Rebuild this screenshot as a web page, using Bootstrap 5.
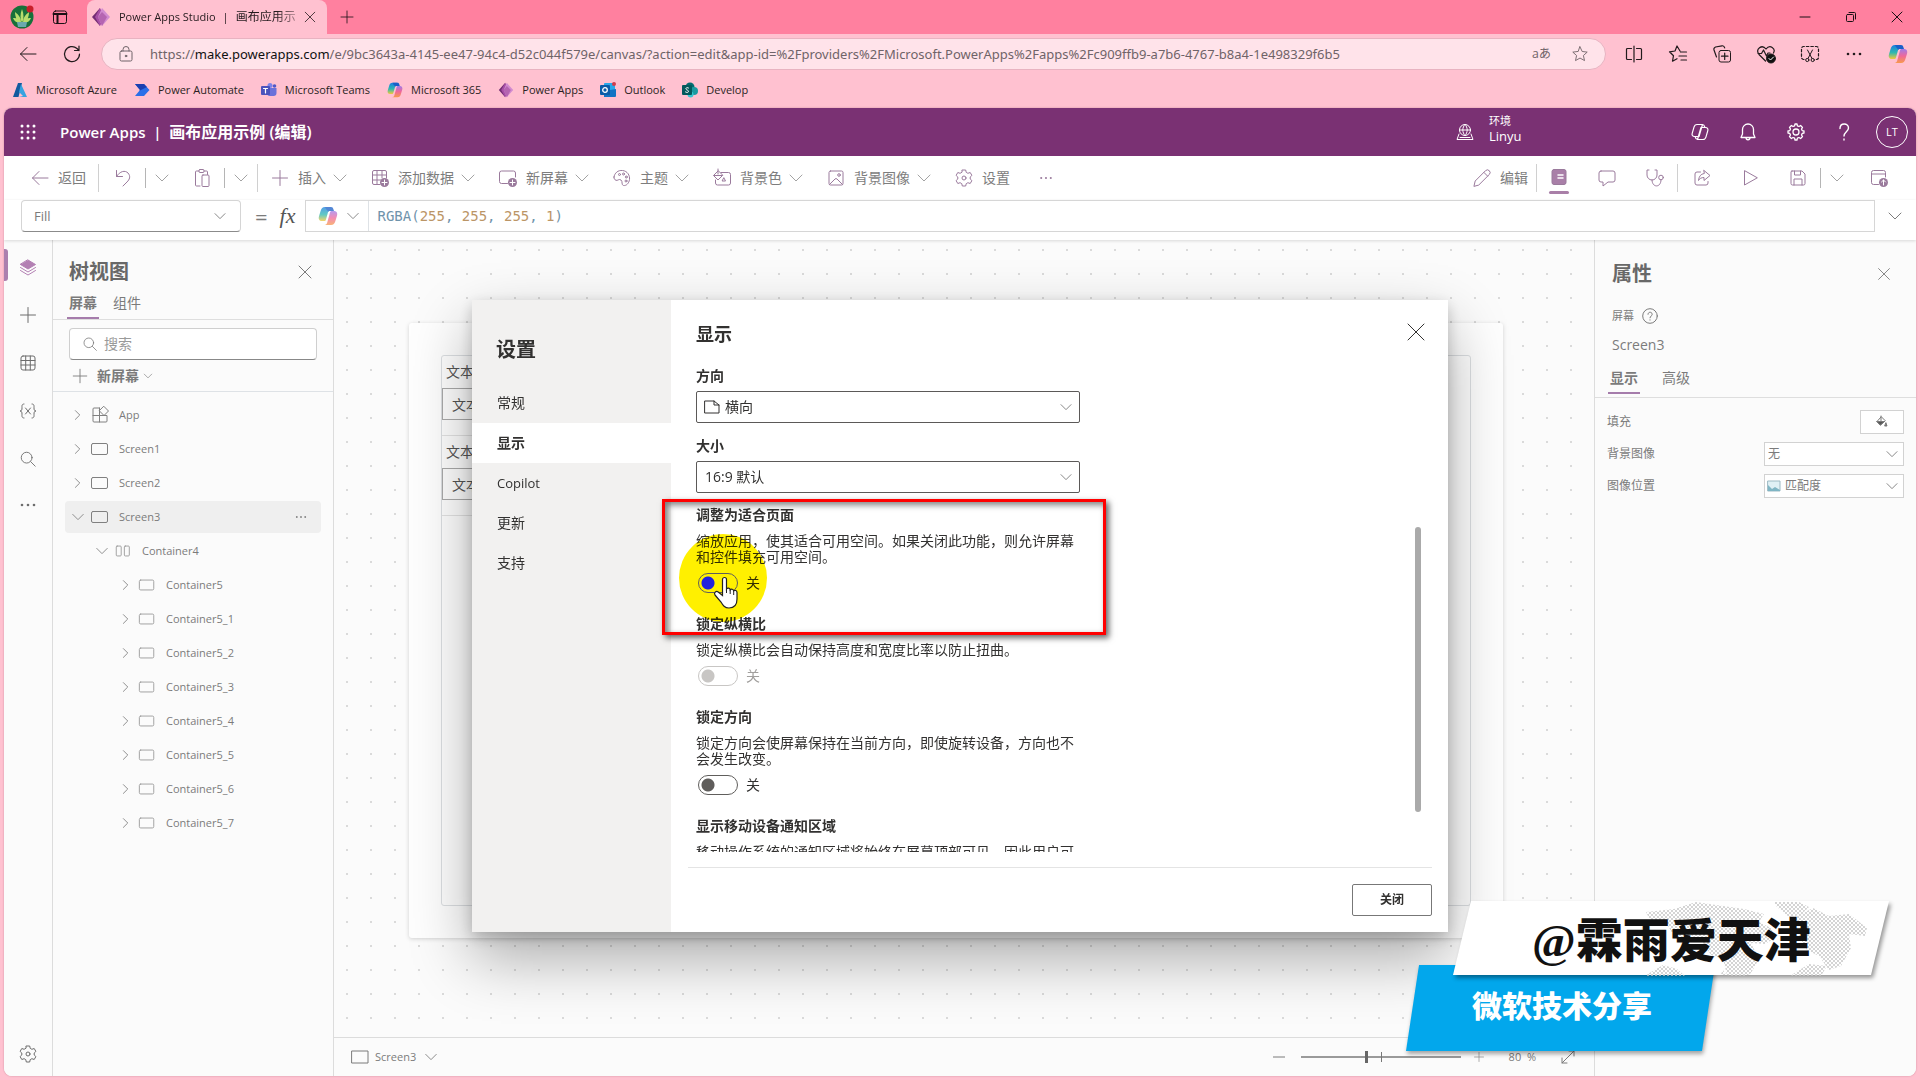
<!DOCTYPE html>
<html lang="zh-CN">
<head>
<meta charset="utf-8">
<meta name="viewport" content="width=device-width, initial-scale=1">
<title>Power Apps Studio | 画布应用示例</title>
<link href="https://cdn.jsdelivr.net/npm/bootstrap@5.3.0/dist/css/bootstrap.min.css" rel="stylesheet">
<style>
body{font-family:"Open Sans","Noto Sans CJK SC",sans-serif;font-size:14px;line-height:20px;color:#7b7b7b;background:#ffc1d0;height:100vh;overflow:hidden}
button{font-family:inherit;color:inherit}
a{color:inherit;text-decoration:none}
.ic{width:20px;height:20px;flex:none;fill:none;stroke:currentColor;stroke-width:1;stroke-linecap:round;stroke-linejoin:round}
.ic-sm{width:16px;height:16px}
.ic-xs{width:12px;height:12px}
.bare{background:none;border:0;padding:0;display:inline-flex;align-items:center;flex:none}
/* browser frame */
.tabstrip{height:34px;background:#ff809f;color:#1b1014}
.stripstart{width:87px;padding-left:10px;gap:16px}
.face{width:24px;height:24px}
.tabitem{width:240px;background:#ffc1d0;border-radius:8px 8px 0 0;font-size:12px;color:#241a1d}
.tabname{width:179px;white-space:nowrap;-webkit-mask-image:linear-gradient(90deg,#000 88%,rgba(0,0,0,.3))}
.tabname b{font-weight:400;font-size:11px}
.winbtn{width:46px;justify-content:center}
.addrrow{height:40px;color:#221a1c;padding:0 12px 0 18px}
.addr{background:#ffe3ea;border:1px solid #e8b3c1;border-radius:16px;height:32px;color:#6f6368;margin:0 18px 0 19px}
.urltext{font-family:"Noto Sans",sans-serif;font-size:13px;white-space:nowrap}
.urltext b{font-weight:400;color:#111}
.favrow{height:34px;padding:0 12px 2px;gap:17px;color:#2b1f23}
.fav{font-size:11px}
/* app */
.appwin{margin:0 4px 4px;border-radius:8px;overflow:hidden;background:#fff;position:relative;box-shadow:0 0 2px #c98a9b;min-height:0}
.suite{height:48px;background:#7a3173;color:#fff;padding:0 8px 0 14px}
.suitename{font-size:15px;font-weight:600;margin-left:22px}
.suitename span{font-size:16px}
.envpick{width:221px;gap:14px}
.envpick small{display:block;font-size:11px;line-height:14px}
.envpick b{display:block;font-size:13px;line-height:16px;font-weight:400;margin-bottom:6px}
.suitebtn{width:48px;justify-content:center}
.person{width:32px;height:32px;border:1px solid #fff;border-radius:50%;font-size:11px;display:flex;align-items:center;justify-content:center}
.cmdbar{height:44px;padding:0 27px 0 26px;color:#7d7d7d}
.cmdbar .ic{color:#9a7a9c}
.cmd{gap:8px}
.cmd .ic-sm,.chev{color:#a3a3a3!important;margin-left:-2px}
.gap22{gap:22px}.gap28{gap:28px}
.rule{width:1px;height:28px;background:#d0d0d0;flex:none;margin:0 14px 0 12px}
.rule-s{height:20px;background:#b5b5b5;margin:0 10px 0 12px}
.rule-t{margin:0 12px 0 8px}
.activetool{position:relative}
.activetool::after{content:"";position:absolute;left:0;right:0;bottom:-6px;height:3px;border-radius:2px;background:#a97fa8}
.fxrow{height:40px;padding:0 13px 9px 17px;box-shadow:0 1px 3px rgba(0,0,0,.14);position:relative;z-index:2;background:#fff}
.sel{appearance:none;border:1px solid #ccc;border-radius:0;background:#fff url("data:image/svg+xml,%3Csvg xmlns='http://www.w3.org/2000/svg' viewBox='0 0 16 16'%3E%3Cpath d='M2 5l6 6 6-6' fill='none' stroke='%23777' stroke-width='1'/%3E%3C/svg%3E") no-repeat right 10px center/14px 14px;color:inherit;padding:0 8px;line-height:20px}
.propsel{width:220px;height:32px;border-radius:4px;border-color:#d5d5d5;border-bottom-color:#8b8b8b;padding-left:12px;font-size:13px;background-position:right 13px center}
.eqmark{margin-left:14px;font-size:22px}
.fxmark{font:italic 22px "Liberation Serif",serif;color:#555;margin:0 10px 0 12px}
.fbox{border:1px solid #d6d6d6;height:32px}
.code{font-family:"DejaVu Sans Mono",monospace;font-size:14px;color:#6f93ab;padding-left:8px}
.code i{font-style:normal;color:#bb9566}
/* workspace */
.work{background:#fbfbfb;min-height:0}
.rail{width:49px;border-right:1px solid #dcdcdc;padding:3px 0 0}
.railbtn{height:48px;width:48px;justify-content:center;position:relative;color:#6d6d6d}
.railbtn.short{height:44px}
.railbtn.on{color:#b380b3}
.railbtn.on::before{content:"";position:absolute;left:0;top:6px;height:32px;width:4px;background:#ab7fae;border-radius:0 3px 3px 0}
.tree{width:281px;border-right:1px solid #dcdcdc}
.ptitle{font-size:20px;line-height:28px;font-weight:700;color:#686868;margin:0}
.ptabs{border-bottom:1px solid #dedede;gap:12px}
.ptabs button{padding:0 2px 4px;border-bottom:2px solid transparent}
.ptabs .on{border-color:#a57cab;font-weight:700}
.searchbox{height:32px;border:1px solid #cfcfcf;border-bottom-color:#888;border-radius:4px;background:#fff;padding:0 12px;gap:6px}
.searchbox input{border:0;outline:0;width:100%;padding:0;background:none}
.searchbox input::placeholder{color:#9a9a9a;opacity:1}
.newscr{padding:6px 16px 5px 18px}
.ic-10{width:10px;height:10px}.ic-14{width:14px;height:14px}.ic-18{width:18px;height:18px}
.trow{height:34px;font-size:11px;padding:1px 12px}
.trow>div{height:32px;border-radius:4px;padding:0 13px 0 6px}
.trow.on>div{background:#efefef}
.l1>div{padding-left:30px}.l2>div{padding-left:54px}
.trow .ic-sm{width:14px;height:14px;color:#999}
.trow .nm{margin-left:9px}
.trow .ic{color:#808080}.trow .ic-sm+.ic{margin-left:5px}
.l1 .ic:not(.ic-sm),.l2 .ic:not(.ic-sm){color:#9a9a9a;width:18px}
.l1 .nm,.l2 .nm{margin-left:10px}
.canvas{background:#fbfbfb radial-gradient(circle,#dadada 1px,transparent 1px) 1px -2px/24px 24px;padding:83px 91px 99px 75px}
.pageframe{background:#fefefe;box-shadow:0 1px 4px rgba(0,0,0,.17);border-radius:3px;padding:32px}
.inner{border:1px solid #dcdfe2;border-radius:3px;height:100%;font-size:14px;color:#555}
.inner div{height:32px;padding:6px 4px 0;width:60%}
.inner .fld{border:1px solid #aaa;padding-left:9px}
.inner .sp{height:16px;border-bottom:1px solid #e3e3e3}
.statusbar{height:39px;border-top:1px solid #dcdcdc;background:#fbfbfb;padding:0 18px 0 17px;font-size:11px}
.zoomer{appearance:none;width:160px;height:14px;margin:0;background:linear-gradient(#9a9a9a,#9a9a9a) center/100% 2px no-repeat}
.zoomer::-webkit-slider-thumb{appearance:none;width:3px;height:12px;background:#666;box-shadow:15px 0 0 -1px #777}
.props{width:322px;border-left:1px solid #dcdcdc;font-size:12px}
.prow{height:32px;padding:0 12px}
.prow .sel{width:140px;height:24px;font-size:12px;padding-left:3px;background-position:right 4px center;border-color:#d2d2d2}
.prow .withpic{padding-left:20px}
.prow .dselwrap .ic{left:1px;top:3px}
.fillbtn{width:44px;height:24px;background:#fff;border:1px solid #d2d2d2;justify-content:center}
/* dialog */
.veil{position:absolute;inset:48px 0 0;z-index:5}
.dlg{width:976px;height:632px;background:#fff;color:#323130;box-shadow:0 26px 58px rgba(0,0,0,.32),0 5px 14px rgba(0,0,0,.2)}
.dside{width:199px;background:#f2f1f0;padding-top:36px}
.dside h2{font-size:20px;line-height:28px;font-weight:700;margin:0 0 19px 24px}
.dside a{display:block;height:40px;line-height:40px;padding-left:25px}
.dside a.on{background:#fff;font-weight:600}
.dside a.latin{font-size:13px}
.dmain{padding:22px 16px 16px 17px;min-width:0}
.dmain h3{font-size:18px;line-height:24px;font-weight:700;margin:0 0 20px 8px}
.dscroll{min-height:0;overflow:hidden;padding-left:8px;position:relative}
.hd{display:block;font-weight:700;line-height:20px}
.dsel{width:384px;height:32px;margin:5px 0 13px;border:1px solid #5b5958;border-radius:2px;font-size:14px;background-position:right 6px center;display:block}
.dsel.last{margin-bottom:12px}
.dselwrap{position:relative}
.dselwrap .ic{position:absolute;left:7px;top:7px;width:18px;height:18px}
.dselwrap .dsel{padding-left:28px}
.opt{width:384px;margin-bottom:21px}
.opt p{line-height:16px;margin:8px 0}
.sw{gap:8px;height:20px;padding-left:2px}
.sw .form-check-input{width:40px;height:20px;margin:0;border:1px solid #605e5c;border-radius:10px;background:radial-gradient(circle at 9px 9px,#5f5d5b 6px,transparent 7px);opacity:1}
.sw .hot{background:radial-gradient(circle at 9px 9px,#2222dd 6px,transparent 7px);position:relative;z-index:3}
.sw .form-check-input:disabled{border-color:#c8c6c4;background:radial-gradient(circle at 9px 9px,#c8c6c4 6px,transparent 7px)}
.sw .form-check-input:disabled~label{color:#a19f9d;opacity:1}
.thumb{position:absolute;right:11px;top:161px;width:6px;height:285px;border-radius:3px;background:#aaa}
.dfoot{border-top:1px solid #e4e4e4;margin-top:15px;padding-top:16px}
.dclose{width:80px;height:32px;border:1px solid #777;border-radius:2px;background:#fff;font-size:12px;font-weight:700}
.xbtn{position:absolute;right:22px;top:22px}
/* recording overlays */
.frame{position:absolute;left:190px;top:199px;width:444px;height:136px;border:3px solid #f00;box-shadow:3px 3px 6px rgba(0,0,0,.6),inset 3px 3px 6px rgba(0,0,0,.5);z-index:3;pointer-events:none}
.spot{position:absolute;left:207px;top:234px;width:88px;height:88px;border-radius:50%;background:#fff000;mix-blend-mode:multiply;pointer-events:none}
.hand{position:absolute;left:240px;top:276px;width:28px;height:34px;z-index:4;pointer-events:none}
.brandplate{position:absolute;right:25px;bottom:20px;width:490px;height:156px;z-index:8}
.brandplate svg{position:absolute;inset:0;overflow:visible}
.brandplate strong{position:absolute;left:131px;top:11px;font:900 47px/60px "Liberation Serif","Noto Sans CJK SC",serif;color:#111;white-space:nowrap}
.brandplate em{position:absolute;left:71px;top:84px;font:normal 900 30px/40px "Noto Sans CJK SC",sans-serif;color:#fff;white-space:nowrap}
</style>
</head>
<body class="d-flex flex-column">
<svg width="0" height="0" class="position-absolute" aria-hidden="true">
<defs>
<linearGradient id="g1" x1="0" y1="0" x2="0" y2="1"><stop offset="0" stop-color="#1a7fe0"/><stop offset=".55" stop-color="#2fb8b0"/><stop offset="1" stop-color="#f3c93a"/></linearGradient>
<linearGradient id="g2" x1="0" y1="0" x2="0" y2="1"><stop offset="0" stop-color="#a07be8"/><stop offset=".5" stop-color="#f0679a"/><stop offset="1" stop-color="#f79a4b"/></linearGradient>
<symbol id="chev" viewBox="0 0 16 16"><path d="M2 5l6 6 6-6"/></symbol>
<symbol id="chevr" viewBox="0 0 16 16"><path d="M5 3l5 5-5 5"/></symbol>
<symbol id="x" viewBox="0 0 20 20"><path d="M4 4l12 12M16 4L4 16"/></symbol>
<symbol id="plus" viewBox="0 0 20 20"><path d="M10 2.500v15M2.500 10h15"/></symbol>
<symbol id="back" viewBox="0 0 20 20"><path d="M18 10H2.500M9 3.500L2.500 10 9 16.500"/></symbol>
<symbol id="dots" viewBox="0 0 20 20"><g fill="currentColor" stroke="none"><circle cx="4" cy="10" r="1.300"/><circle cx="10" cy="10" r="1.300"/><circle cx="16" cy="10" r="1.300"/></g></symbol>
<symbol id="gear" viewBox="0 0 20 20"><path d="M8.300 2h3.400l.5 2.300 1.700 1 2.300-.8 1.700 2.900-1.700 1.600v2l1.700 1.600-1.700 2.900-2.300-.8-1.700 1-.5 2.300H8.300l-.5-2.300-1.700-1-2.300.8-1.700-2.900L3.800 11V9L2.100 7.400l1.700-2.900 2.300.8 1.700-1z"/><circle cx="10" cy="10" r="2"/></symbol>
<symbol id="search" viewBox="0 0 20 20"><circle cx="8.500" cy="8.500" r="6"/><path d="M13 13l5 5"/></symbol>
<symbol id="rect" viewBox="0 0 20 20"><rect x="1.500" y="4.500" width="16" height="11" rx="1.500"/></symbol>
<symbol id="star" viewBox="0 0 20 20"><path d="M10 2l2.400 5.200 5.600.7-4.200 3.800 1.200 5.600-5-2.800-5 2.800 1.200-5.600L2 7.900l5.600-.7z"/></symbol>
<symbol id="copilot" viewBox="0 0 20 20"><g stroke="none"><path fill="url(#g1)" d="M7 1h6.500c-1.500 0-2.300 1-2.800 2.800L8 13.500c-.3 1-.8 1.500-1.800 1.500H4C1.200 15 .2 12.800 1 10.200L2.600 5C3.400 2.300 4.500 1 7 1z"/><path fill="#1a5fc8" d="M7 1h6c1.500 0 2 .8 2.500 2.500L16 5h-5l-.5 1L8 3z"/><path fill="url(#g2)" d="M13 19H6.500c1.500 0 2.300-1 2.800-2.800L12 6.500c.3-1 .8-1.500 1.800-1.500H16c2.800 0 3.800 2.200 3 4.800L17.400 15c-.8 2.700-1.900 4-4.400 4z"/></g></symbol>
<symbol id="copline" viewBox="0 0 20 20"><path d="M7 2.500h5.500L9 14.500H4.500c-2 0-2.800-1.500-2.300-3.200L4 5.200C4.500 3.400 5.300 2.500 7 2.500zM13 17.500H7.500l3.500-12h4.500c2 0 2.800 1.500 2.300 3.200L16 14.800c-.5 1.800-1.300 2.700-3 2.700zM12.500 2.500c1.300 0 1.800.7 2.200 2.500M7.500 17.500c-1.300 0-1.800-.7-2.200-2.500" stroke-width="1.200"/></symbol>
<symbol id="papps" viewBox="0 0 20 20"><g stroke="none"><path fill="#722c73" d="M9 1L1 10l8 9z"/><path fill="#a74fa5" d="M9 1l5 9-5 9-5-9z"/><path fill="#d28bd0" d="M11 1l8 9-8 9-4-9z"/><path fill="#b565b1" d="M11 5l5 5-5 9-4-9z"/></g></symbol>
</defs>
</svg>

<div class="tabstrip d-flex align-items-stretch">
  <div class="stripstart d-flex align-items-center">
    <svg class="face" viewBox="0 0 24 24"><circle cx="12" cy="12" r="11.500" fill="#18703a"/><path d="M12 18c-2-4-2-9 0-14 2 5 2 10 0 14zM11 18C7 16 5 12 5 7c4 3 6 6 6 11zM13 18c4-2 6-6 6-11-4 3-6 6-6 11zM11 18c-4 0-7-2-8-5 4 0 7 2 8 5zM13 18c4 0 7-2 8-5-4 0-7 2-8 5z" fill="#b8dc6d"/><path d="M7 17h10l-1 5H8z" fill="#6aa9ad"/><circle cx="20" cy="4" r="3.500" fill="#c81e2a"/></svg>
    <svg class="ic" viewBox="0 0 20 20" stroke-width="1.500"><rect x="3.500" y="4" width="13" height="12.500" rx="2"/><path d="M3.500 7h13M7.500 7v9" stroke-width="2"/></svg>
  </div>
  <div class="tabitem d-flex align-items-center ps-1">
    <svg class="ic me-2" viewBox="0 0 20 20"><use href="#papps"/></svg>
    <span class="tabname"><b>Power Apps Studio <span class="mx-1">|</span></b> 画布应用示</span>
    <button class="bare ms-1" aria-label="关闭标签页"><svg class="ic ic-sm"><use href="#x"/></svg></button>
  </div>
  <button class="bare ms-2 ps-1" aria-label="新建标签页"><svg class="ic ic-sm"><use href="#plus"/></svg></button>
  <div class="ms-auto d-flex">
    <button class="bare winbtn" aria-label="最小化"><svg class="ic ic-xs" viewBox="0 0 12 12"><path d="M1 6h10"/></svg></button>
    <button class="bare winbtn" aria-label="还原"><svg class="ic ic-xs" viewBox="0 0 12 12"><rect x="1.500" y="3.500" width="7" height="7" rx="1"/><path d="M4 1.500h5.500a1 1 0 0 1 1 1V8"/></svg></button>
    <button class="bare winbtn" aria-label="关闭"><svg class="ic ic-xs" viewBox="0 0 12 12"><path d="M1 1l10 10M11 1L1 11"/></svg></button>
  </div>
</div>

<div class="addrrow d-flex align-items-center">
  <button class="bare" aria-label="后退"><svg class="ic" stroke-width="1.200"><use href="#back"/></svg></button>
  <button class="bare ms-4" aria-label="刷新"><svg class="ic" viewBox="0 0 20 20"><path d="M17.500 10A7.500 7.500 0 1 1 15 4.500L17 6.500M17 2v4.500h-4.500" stroke-width="1.200"/></svg></button>
  <div class="addr d-flex align-items-center flex-fill px-3 overflow-hidden">
    <svg class="ic ic-sm me-3" viewBox="0 0 16 16"><rect x="2" y="5" width="12" height="10" rx="1.500"/><path d="M5 5V3.500a3 3 0 0 1 6 0V5"/><circle cx="8" cy="10" r=".8" fill="currentColor"/></svg>
    <a class="urltext flex-fill" href="#">https://<b>make.powerapps.com</b>/e/9bc3643a-4145-ee47-94c4-d52c044f579e/canvas/?action=edit&amp;app-id=%2Fproviders%2FMicrosoft.PowerApps%2Fapps%2Fc909ffb9-a7b6-4767-b8a4-1e498329f6b5</a>
    <span class="me-3 pe-1 small">aあ</span>
    <svg class="ic ic-18" viewBox="0 0 20 20"><use href="#star"/></svg>
  </div>
  <div class="d-flex gap-4">
    <button class="bare" aria-label="分屏"><svg class="ic" viewBox="0 0 20 20"><path d="M10 2v16M7.500 4.500h-4a1 1 0 0 0-1 1v9a1 1 0 0 0 1 1h4M12.500 4.500h4a1 1 0 0 1 1 1v9a1 1 0 0 1-1 1h-4" stroke-width="1.200"/></svg></button>
    <button class="bare" aria-label="收藏夹"><svg class="ic" viewBox="0 0 20 20"><path d="M12 7L9 2 7 7l-5.500.8 4 3.900-1 5.500 4.500-2.500M12.500 8h6M11 12h7.500M13 16h5.500" stroke-width="1.200"/></svg></button>
    <button class="bare" aria-label="集锦"><svg class="ic" viewBox="0 0 20 20"><rect x="7" y="6.500" width="11.500" height="11.500" rx="2"/><path d="M12.700 9v6.500M9.500 12.200H16M4.500 13L2 6c-.4-1.500.3-2.500 1.500-3L10 1.800c1.500-.3 2.300.5 2.700 2" stroke-width="1.200"/></svg></button>
    <button class="bare" aria-label="浏览器概要"><svg class="ic" viewBox="0 0 20 20"><path d="M9.500 17L3 10.500C-1 5 6 0 10 5c4-5 10-.5 7.500 4M2 9.500h3.500L7.500 6l3 6 1.500-3h2" stroke-width="1.200"/><circle cx="15" cy="14.500" r="4.500" fill="#111"/><path d="M13 14.500l1.500 1.500 3-3" stroke="#fff"/></svg></button>
    <button class="bare" aria-label="网页捕获"><svg class="ic" viewBox="0 0 20 20"><path d="M4 15.500H3.500a2 2 0 0 1-2-2v-9a2 2 0 0 1 2-2h13a2 2 0 0 1 2 2v9a2 2 0 0 1-2 2H16" stroke-dasharray="2.500 2" stroke-width="1.200"/><path d="M7.500 6l4.500 8.500M12.500 6L8 14.500"/><circle cx="7.300" cy="16" r="1.600"/><circle cx="12.700" cy="16" r="1.600"/></svg></button>
    <button class="bare" aria-label="更多"><svg class="ic"><use href="#dots"/></svg></button>
    <button class="bare" aria-label="Copilot"><svg class="ic"><use href="#copilot"/></svg></button>
  </div>
</div>

<nav class="favrow d-flex align-items-center">
  <a class="fav d-flex align-items-center gap-1" href="#"><svg class="ic ic-sm me-1" viewBox="0 0 16 16" stroke="none"><path d="M6 1h4L6.500 15H1z" fill="#135a9e" stroke="none"/><path d="M9 2l6 13H7l4-1-4-4z" fill="#36a3e0" stroke="none"/></svg>Microsoft Azure</a>
  <a class="fav d-flex align-items-center gap-1" href="#"><svg class="ic ic-sm me-1" viewBox="0 0 16 16"><path d="M1 2h9l5.500 6-5.500 6H1l5-6z" fill="#2b6fe8" stroke="none"/><path d="M1 2h9l3 3-8 4 1-1z" fill="#1a3fb0" stroke="none"/></svg>Power Automate</a>
  <a class="fav d-flex align-items-center gap-1" href="#"><svg class="ic ic-sm me-1" viewBox="0 0 16 16"><g stroke="none"><circle cx="9" cy="3.500" r="2.500" fill="#7b83eb"/><circle cx="13.500" cy="4" r="1.800" fill="#5059c9"/><path d="M6 6h9.500v5a3 3 0 0 1-3 3H8a3 3 0 0 1-2-3z" fill="#6a72da"/><rect y="4" width="9" height="9" rx="1" fill="#4b53bc"/></g><path d="M2.500 6.500h4M4.500 6.500V11" stroke="#fff" stroke-width="1.200"/></svg>Microsoft Teams</a>
  <a class="fav d-flex align-items-center gap-1" href="#"><svg class="ic ic-sm me-1"><use href="#copilot"/></svg>Microsoft 365</a>
  <a class="fav d-flex align-items-center gap-1" href="#"><svg class="ic ic-sm me-1"><use href="#papps"/></svg>Power Apps</a>
  <a class="fav d-flex align-items-center gap-1" href="#"><svg class="ic ic-sm me-1" viewBox="0 0 16 16"><g stroke="none"><rect x="4" y="1" width="11" height="13" rx="1" fill="#28a8ea"/><path d="M4 9l12-2v7a1 1 0 0 1-1 1H4z" fill="#1273c4"/><rect y="3" width="10" height="10" rx="1" fill="#0b5ca8"/><circle cx="14" cy="2" r="2" fill="#d43b4b"/></g><circle cx="5" cy="8" r="2.300" stroke="#fff" stroke-width="1.300"/></svg>Outlook</a>
  <a class="fav d-flex align-items-center gap-1" href="#"><svg class="ic ic-sm me-1" viewBox="0 0 16 16"><g stroke="none"><circle cx="8" cy="5" r="4.500" fill="#036c70"/><circle cx="12" cy="9" r="4" fill="#1a9ba1"/><circle cx="8.500" cy="12.500" r="3" fill="#37c6d0"/><rect y="3" width="10" height="10" rx="1" fill="#03595c"/></g><path d="M6.500 6C5 5 3.500 6 4 7.200c.5 1 2.500.8 2.500 2.200 0 1.200-2 1.400-3 .6" stroke="#fff"/></svg>Develop</a>
</nav>

<div class="appwin d-flex flex-column flex-fill">
  <header class="suite d-flex align-items-center flex-shrink-0">
    <button class="bare" aria-label="应用启动器"><svg class="ic" viewBox="0 0 20 20"><g fill="#fff" stroke="none"><circle cx="4" cy="4" r="1.500"/><circle cx="10" cy="4" r="1.500"/><circle cx="16" cy="4" r="1.500"/><circle cx="4" cy="10" r="1.500"/><circle cx="10" cy="10" r="1.500"/><circle cx="16" cy="10" r="1.500"/><circle cx="4" cy="16" r="1.500"/><circle cx="10" cy="16" r="1.500"/><circle cx="16" cy="16" r="1.500"/></g></svg></button>
    <span class="suitename">Power Apps&nbsp; |&nbsp; <span>画布应用示例 (编辑)</span></span>
    <div class="envpick ms-auto d-flex align-items-center">
      <svg class="ic" viewBox="0 0 20 20"><circle cx="10" cy="8" r="5.500"/><path d="M4.500 8h11M10 2.500c-3 3-3 8 0 11M10 2.500c3 3 3 8 0 11M4 12l-2 5.500h16L16 12M5 15.500h10"/></svg>
      <div><small>环境</small><b>Linyu</b></div>
    </div>
    <button class="bare suitebtn" aria-label="Copilot"><svg class="ic"><use href="#copline"/></svg></button>
    <button class="bare suitebtn" aria-label="通知"><svg class="ic" viewBox="0 0 20 20"><path d="M10 2a5.500 5.500 0 0 0-5.500 5.500V12L3 15.500h14L15.500 12V7.500A5.500 5.500 0 0 0 10 2zM8 15.500c0 3 4 3 4 0" stroke-width="1.300"/></svg></button>
    <button class="bare suitebtn" aria-label="设置"><svg class="ic" viewBox="0 0 20 20"><path d="M9 2h2l.4 1.800 1.600.7L14.600 3.500l1.900 1.900L15.500 7l.7 1.600L18 9v2l-1.800.4-.7 1.600 1 1.600-1.900 1.900-1.600-1-1.600.7L11 18H9l-.4-1.800-1.600-.7-1.600 1-1.900-1.900 1-1.600-.7-1.600L2 11V9l1.800-.4L4.500 7l-1-1.600 1.900-1.900L7 4.500l1.600-.7z" stroke-width="1.300"/><circle cx="10" cy="10" r="3" stroke-width="1.300"/></svg></button>
    <button class="bare suitebtn" aria-label="帮助"><svg class="ic" viewBox="0 0 20 20"><path d="M6 6.500C6 .5 14.500.8 14.500 6c0 3.500-4.500 4-4.500 8M10 17v1" stroke-width="1.400"/></svg></button>
    <button class="bare ms-2" aria-label="帐户"><span class="person">LT</span></button>
  </header>

  <div class="cmdbar d-flex align-items-center flex-shrink-0">
    <button class="bare cmd"><svg class="ic"><use href="#back"/></svg>返回</button>
    <span class="rule"></span>
    <button class="bare" aria-label="撤消"><svg class="ic" viewBox="0 0 20 20"><path d="M3.500 2.500v6h6M3.500 8.500C7 3 12 2 15 5c3 3.500 1.500 6.500-1 9l-4 4"/></svg></button>
    <span class="rule rule-s"></span>
    <button class="bare" aria-label="撤消选项"><svg class="ic ic-sm chev"><use href="#chev"/></svg></button>
    <div class="d-flex align-items-center gap22"><span></span>
    <button class="bare" aria-label="粘贴"><svg class="ic" viewBox="0 0 20 20"><path d="M8 18H4.500a1 1 0 0 1-1-1V4a1 1 0 0 1 1-1H7M12 3h2.500a1 1 0 0 1 1 1v2.500"/><rect x="7" y="1.500" width="5" height="3" rx="1"/><rect x="10" y="7" width="7" height="11.500" rx="1"/></svg></button></div>
    <span class="rule rule-s"></span>
    <button class="bare" aria-label="粘贴选项"><svg class="ic ic-sm chev"><use href="#chev"/></svg></button>
    <span class="rule rule-t"></span>
    <div class="d-flex gap22">
      <button class="bare cmd"><svg class="ic"><use href="#plus"/></svg>插入<svg class="ic ic-sm"><use href="#chev"/></svg></button>
      <button class="bare cmd"><svg class="ic" viewBox="0 0 20 20"><path d="M10 16.500H4a1.500 1.500 0 0 1-1.500-1.500V4A1.500 1.500 0 0 1 4 2.500h11A1.500 1.500 0 0 1 16.500 4v6M2.500 7h14M2.500 12h8M7 2.500v14M12 2.500V10"/><circle cx="14.500" cy="14.500" r="4.500" fill="#9a7a9c" stroke="none"/><path d="M14.500 12v5M12 14.500h5" stroke="#fff"/></svg>添加数据<svg class="ic ic-sm"><use href="#chev"/></svg></button>
      <button class="bare cmd"><svg class="ic" viewBox="0 0 20 20"><path d="M9.500 15.500H3.500a2 2 0 0 1-2-2V5a2 2 0 0 1 2-2h12a2 2 0 0 1 2 2v4"/><circle cx="14.500" cy="14.500" r="4.500" fill="#9a7a9c" stroke="none"/><path d="M14.500 12v5M12 14.500h5" stroke="#fff"/></svg>新屏幕<svg class="ic ic-sm"><use href="#chev"/></svg></button>
      <button class="bare cmd"><svg class="ic" viewBox="0 0 20 20"><path d="M2 9c.5-4 4-7 8.500-6.500 5 .5 7.500 5 7 9-.5 4-3.500 6.500-6 6-2.500-.6-.5-4-2.500-5.500C7 10.500 5.500 13 4 12.300 2.500 11.700 1.800 10.500 2 9z"/><circle cx="7.500" cy="6.500" r="1"/><circle cx="11.500" cy="6" r="1"/><circle cx="14.300" cy="9" r="1"/><circle cx="14" cy="13" r="1"/></svg>主题<svg class="ic ic-sm"><use href="#chev"/></svg></button>
      <button class="bare cmd"><svg class="ic" viewBox="0 0 20 20"><path d="M9 4.500h7.500a2 2 0 0 1 2 2V15a2 2 0 0 1-2 2h-11a2 2 0 0 1-2-2v-3M6 1v5M6 3L1.500 7.500 6 12l4.500-4.500zM2 7.500h8M12 10l1.500 3h-3z"/></svg>背景色<svg class="ic ic-sm"><use href="#chev"/></svg></button>
      <button class="bare cmd"><svg class="ic" viewBox="0 0 20 20"><rect x="3" y="3" width="14" height="14" rx="1.500"/><path d="M3.500 16.500L9 11q1-1 2 0l5.500 5.500"/><circle cx="13" cy="7" r="1.300"/></svg>背景图像<svg class="ic ic-sm"><use href="#chev"/></svg></button>
      <button class="bare cmd"><svg class="ic"><use href="#gear"/></svg>设置</button>
    </div>
    <button class="bare ms-4 ps-1" aria-label="更多命令"><svg class="ic ic-sm"><use href="#dots"/></svg></button>
    <button class="bare cmd ms-auto"><svg class="ic" viewBox="0 0 20 20"><path d="M2 18l1.200-5L13.500 2.700a2.600 2.600 0 0 1 3.800 3.800L7 16.800zM12 4.500L15.500 8"/></svg>编辑</button>
    <span class="rule rule-t"></span>
    <div class="d-flex gap28">
      <button class="bare activetool" aria-label="属性"><svg class="ic" viewBox="0 0 20 20"><rect x="3" y="1.500" width="14" height="15" rx="2" fill="#a97fa8"/><path d="M9 7h5M9 10h5" stroke="#fff" stroke-width="1.500"/></svg></button>
      <button class="bare" aria-label="注释"><svg class="ic" viewBox="0 0 20 20"><path d="M4 3h12a2 2 0 0 1 2 2v7a2 2 0 0 1-2 2h-5l-5 4v-4H4a2 2 0 0 1-2-2V5a2 2 0 0 1 2-2z"/></svg></button>
      <button class="bare" aria-label="应用检查器"><svg class="ic" viewBox="0 0 20 20"><path d="M4 2H2v5a5 5 0 0 0 10 0V2h-2M7 12c0 8 9 8 9 0"/><circle cx="16" cy="9.500" r="2.300"/></svg></button>
    </div>
    <span class="rule"></span>
    <div class="d-flex gap28">
      <button class="bare" aria-label="共享"><svg class="ic" viewBox="0 0 20 20"><path d="M8.500 4H5a2 2 0 0 0-2 2v9a2 2 0 0 0 2 2h9a2 2 0 0 0 2-2v-1.500M12 2.500l6 5-6 5V9.500c-2.500 0-4.500 1-5.500 3C7 8.500 8.500 6 12 5.500z"/></svg></button>
      <button class="bare" aria-label="预览"><svg class="ic" viewBox="0 0 20 20"><path d="M4.500 3v14L17 10z"/></svg></button>
      <button class="bare" aria-label="保存"><svg class="ic" viewBox="0 0 20 20"><path d="M4 3h10l3 3v9.500A1.500 1.500 0 0 1 15.500 17h-11A1.500 1.500 0 0 1 3 15.500V4a1 1 0 0 1 1-1zM6.500 3v4h6V3M6 17v-6h8v6"/></svg></button>
    </div>
    <span class="rule rule-s"></span>
    <button class="bare" aria-label="保存选项"><svg class="ic ic-sm chev"><use href="#chev"/></svg></button>
    <button class="bare ms-4" aria-label="发布"><svg class="ic" viewBox="0 0 20 20"><path d="M9.500 16.500h-5a2 2 0 0 1-2-2v-10a2 2 0 0 1 2-2h10a2 2 0 0 1 2 2V9M2.500 6h14"/><circle cx="14.500" cy="14.500" r="4.500" fill="#9a7a9c" stroke="none"/><path d="M14.500 17v-5M12.500 14l2-2 2 2" stroke="#fff"/></svg></button>
  </div>

  <div class="fxrow d-flex align-items-center flex-shrink-0">
    <select class="sel propsel" aria-label="属性"><option>Fill</option></select>
    <span class="eqmark">=</span>
    <span class="fxmark">fx</span>
    <div class="fbox d-flex align-items-center flex-fill">
      <button class="bare h-100 border-end ps-2 pe-2 gap-1 ms-1" aria-label="Copilot"><svg class="ic opacity-75"><use href="#copilot"/></svg><svg class="ic ic-14 ms-1"><use href="#chev"/></svg></button>
      <span class="code">RGBA(<i>255</i>, <i>255</i>, <i>255</i>, <i>1</i>)</span>
    </div>
    <button class="bare ms-2 ps-1" aria-label="展开编辑栏"><svg class="ic ic-sm"><use href="#chev"/></svg></button>
  </div>

  <div class="work d-flex flex-fill">
    <nav class="rail d-flex flex-column flex-shrink-0">
      <button class="bare railbtn on" aria-label="树视图"><svg class="ic" viewBox="0 0 20 20"><path d="M10 3l7.500 4.500L10 12 2.500 7.500z" fill="currentColor"/><path d="M2.500 10.500L10 15l7.500-4.500M2.500 13.500L10 18l7.500-4.500"/></svg></button>
      <button class="bare railbtn" aria-label="插入"><svg class="ic"><use href="#plus"/></svg></button>
      <button class="bare railbtn" aria-label="数据"><svg class="ic" viewBox="0 0 20 20"><rect x="3" y="3" width="14" height="14" rx="2"/><path d="M3 7.500h14M3 12h14M7.700 3v14M12.300 3v14"/></svg></button>
      <button class="bare railbtn" aria-label="变量"><svg class="ic" viewBox="0 0 20 20"><path d="M6 3C3.500 3 4 5 4 7s-.5 3-2 3c1.500 0 2 1 2 3s-.5 4 2 4M14 3c2.500 0 2 2 2 4s.5 3 2 3c-1.500 0-2 1-2 3s.5 4-2 4M7.500 7l5 6M12.500 7l-5 6"/></svg></button>
      <button class="bare railbtn" aria-label="搜索"><svg class="ic ic-18"><use href="#search"/></svg></button>
      <button class="bare railbtn short" aria-label="更多"><svg class="ic"><use href="#dots"/></svg></button>
      <button class="bare railbtn short mt-auto" aria-label="设置"><svg class="ic"><use href="#gear"/></svg></button>
    </nav>

    <aside class="tree flex-shrink-0">
      <div class="d-flex justify-content-between align-items-center" style="padding:18px 18px 0 16px"><h2 class="ptitle">树视图</h2><button class="bare" aria-label="关闭树视图"><svg class="ic"><use href="#x"/></svg></button></div>
      <div class="ptabs d-flex" style="padding:7px 14px 0"><button class="bare on">屏幕</button><button class="bare">组件</button></div>
      <div class="pt-2 px-3"><label class="searchbox d-flex align-items-center"><svg class="ic ic-sm"><use href="#search"/></svg><input type="search" placeholder="搜索" aria-label="搜索"></label></div>
      <div class="newscr border-bottom d-flex"><button class="bare fw-bold"><svg class="ic ic-18 me-2"><use href="#plus"/></svg>新屏幕<svg class="ic ic-10 ms-1"><use href="#chev"/></svg></button></div>
      <ul class="list-unstyled mb-0" style="padding-top:6px">
        <li class="trow"><div class="d-flex align-items-center"><svg class="ic ic-sm"><use href="#chevr"/></svg><svg class="ic" viewBox="0 0 20 20"><path d="M9.500 3H4a1 1 0 0 0-1 1v12a1 1 0 0 0 1 1h12a1 1 0 0 0 1-1v-5.500H3M9.500 3v14M14 1.500L18.500 6 14 10.500 9.500 6z"/></svg><span class="nm">App</span></div></li>
        <li class="trow"><div class="d-flex align-items-center"><svg class="ic ic-sm"><use href="#chevr"/></svg><svg class="ic"><use href="#rect"/></svg><span class="nm">Screen1</span></div></li>
        <li class="trow"><div class="d-flex align-items-center"><svg class="ic ic-sm"><use href="#chevr"/></svg><svg class="ic"><use href="#rect"/></svg><span class="nm">Screen2</span></div></li>
        <li class="trow on"><div class="d-flex align-items-center"><svg class="ic ic-sm"><use href="#chev"/></svg><svg class="ic"><use href="#rect"/></svg><span class="nm">Screen3</span><button class="bare ms-auto" aria-label="更多选项"><svg class="ic ic-sm"><use href="#dots"/></svg></button></div></li>
        <li class="trow l1"><div class="d-flex align-items-center"><svg class="ic ic-sm"><use href="#chev"/></svg><svg class="ic" viewBox="0 0 20 20"><rect x="2.500" y="4.500" width="5.500" height="11" rx="1"/><rect x="11.500" y="4.500" width="5.500" height="11" rx="1"/></svg><span class="nm">Container4</span></div></li>
        <li class="trow l2"><div class="d-flex align-items-center"><svg class="ic ic-sm"><use href="#chevr"/></svg><svg class="ic"><use href="#rect"/></svg><span class="nm">Container5</span></div></li>
        <li class="trow l2"><div class="d-flex align-items-center"><svg class="ic ic-sm"><use href="#chevr"/></svg><svg class="ic"><use href="#rect"/></svg><span class="nm">Container5_1</span></div></li>
        <li class="trow l2"><div class="d-flex align-items-center"><svg class="ic ic-sm"><use href="#chevr"/></svg><svg class="ic"><use href="#rect"/></svg><span class="nm">Container5_2</span></div></li>
        <li class="trow l2"><div class="d-flex align-items-center"><svg class="ic ic-sm"><use href="#chevr"/></svg><svg class="ic"><use href="#rect"/></svg><span class="nm">Container5_3</span></div></li>
        <li class="trow l2"><div class="d-flex align-items-center"><svg class="ic ic-sm"><use href="#chevr"/></svg><svg class="ic"><use href="#rect"/></svg><span class="nm">Container5_4</span></div></li>
        <li class="trow l2"><div class="d-flex align-items-center"><svg class="ic ic-sm"><use href="#chevr"/></svg><svg class="ic"><use href="#rect"/></svg><span class="nm">Container5_5</span></div></li>
        <li class="trow l2"><div class="d-flex align-items-center"><svg class="ic ic-sm"><use href="#chevr"/></svg><svg class="ic"><use href="#rect"/></svg><span class="nm">Container5_6</span></div></li>
        <li class="trow l2"><div class="d-flex align-items-center"><svg class="ic ic-sm"><use href="#chevr"/></svg><svg class="ic"><use href="#rect"/></svg><span class="nm">Container5_7</span></div></li>
      </ul>
    </aside>

    <main class="d-flex flex-column flex-fill overflow-hidden">
      <div class="canvas flex-fill d-flex flex-column">
        <div class="pageframe flex-fill"><div class="inner">
          <div>文本</div><div class="fld">文本</div><div class="sp"></div>
          <div>文本</div><div class="fld">文本</div><div class="sp"></div>
        </div></div>
      </div>
      <div class="statusbar d-flex align-items-center flex-shrink-0">
        <button class="bare"><svg class="ic me-1" viewBox="0 0 20 20"><rect x="1" y="4" width="16" height="12"/></svg>Screen3<svg class="ic ic-14 ms-2"><use href="#chev"/></svg></button>
        <div class="ms-auto d-flex align-items-center">
          <button class="bare" aria-label="缩小"><svg class="ic ic-xs me-3" viewBox="0 0 12 12"><path d="M0 6h12"/></svg></button>
          <input type="range" class="zoomer" min="10" max="180" value="80" aria-label="缩放">
          <button class="bare ms-2 me-4 ps-1" aria-label="放大"><svg class="ic ic-xs"><use href="#plus"/></svg></button>
          <span>80&nbsp; %</span>
          <button class="bare ms-4" aria-label="适应窗口"><svg class="ic ic-sm" viewBox="0 0 16 16"><path d="M2 14L14 2M9 2h5v5M2 9v5h5"/></svg></button>
        </div>
      </div>
    </main>

    <aside class="props flex-shrink-0">
      <div class="d-flex justify-content-between align-items-center" style="padding:20px 23px 0 17px"><h2 class="ptitle">属性</h2><button class="bare" aria-label="关闭属性"><svg class="ic ic-18"><use href="#x"/></svg></button></div>
      <div class="d-flex align-items-center gap-2" style="padding:18px 17px 0;font-size:11px">屏幕<svg class="ic ic-sm" viewBox="0 0 16 16"><circle cx="8" cy="8" r="7.300"/><path d="M6 6.300c0-3 4.200-2.600 4.200 0C10.200 8 8 8 8 9.800M8 11.800v.3"/></svg></div>
      <div style="padding:9px 17px 0;font-size:14px">Screen3</div>
      <div class="ptabs d-flex" style="padding:13px 13px 3px;gap:20px;font-size:14px"><button class="bare on">显示</button><button class="bare">高级</button></div>
      <div class="pt-2">
        <div class="prow d-flex justify-content-between align-items-center"><span>填充</span><button class="bare fillbtn" aria-label="填充"><svg class="ic ic-sm" viewBox="0 0 16 16"><path d="M7 2v5M7 3L3 7.500 6.500 11 11 7z" /><path d="M3 7.500h7.500L6.500 11z" fill="#555"/><path d="M12 9l1 3h-2z" fill="#555"/></svg></button></div>
        <div class="prow d-flex justify-content-between align-items-center"><label for="bgimg">背景图像</label><select id="bgimg" class="sel"><option>无</option></select></div>
        <div class="prow d-flex justify-content-between align-items-center"><label for="imgpos">图像位置</label><span class="dselwrap"><select id="imgpos" class="sel withpic"><option>匹配度</option></select><svg class="ic" viewBox="0 0 18 18"><rect x="3" y="4" width="12" height="10" fill="#dff0f5" stroke="#9cb9c3"/><path d="M3 14V8l4 4 3-2 5 3v1z" fill="#7fb5c4" stroke="none"/></svg></span></div>
      </div>
    </aside>
  </div>

  <div class="veil d-flex align-items-center justify-content-center">
    <section class="dlg d-flex position-relative" role="dialog" aria-label="设置">
      <nav class="dside flex-shrink-0"><h2>设置</h2>
        <a href="#">常规</a><a href="#" class="on">显示</a><a href="#" class="latin">Copilot</a><a href="#">更新</a><a href="#">支持</a>
      </nav>
      <div class="dmain d-flex flex-column flex-fill">
        <h3>显示</h3>
        <div class="dscroll flex-fill">
          <label class="hd" for="orient">方向</label>
          <div class="dselwrap"><select id="orient" class="sel dsel"><option>横向</option></select><svg class="ic" viewBox="0 0 18 18"><path d="M2 3h9l5 4v8H2zM11 3v4h5"/></svg></div>
          <label class="hd" for="dim">大小</label>
          <select id="dim" class="sel dsel last"><option>16:9 默认</option></select>
          <div class="opt"><div class="hd">调整为适合页面</div><p>缩放应用，使其适合可用空间。如果关闭此功能，则允许屏幕和控件填充可用空间。</p><div class="sw d-flex align-items-center"><input class="form-check-input hot" type="checkbox" role="switch" id="s1"><label for="s1">关</label></div></div>
          <div class="opt"><div class="hd">锁定纵横比</div><p>锁定纵横比会自动保持高度和宽度比率以防止扭曲。</p><div class="sw d-flex align-items-center"><input class="form-check-input" type="checkbox" role="switch" id="s2" disabled><label for="s2">关</label></div></div>
          <div class="opt"><div class="hd">锁定方向</div><p>锁定方向会使屏幕保持在当前方向，即使旋转设备，方向也不会发生改变。</p><div class="sw d-flex align-items-center"><input class="form-check-input" type="checkbox" role="switch" id="s3"><label for="s3">关</label></div></div>
          <div class="opt"><div class="hd">显示移动设备通知区域</div><p>移动操作系统的通知区域将始终在屏幕顶部可见，因此用户可</p></div>
          <span class="thumb"></span>
        </div>
        <div class="dfoot d-flex justify-content-end"><button class="dclose">关闭</button></div>
      </div>
      <button class="bare xbtn" aria-label="关闭"><svg class="ic"><path d="M2 2l16 16M18 2L2 18"/></svg></button>
      <span class="spot"></span>
      <span class="frame"></span>
      <svg class="hand" viewBox="0 0 28 34"><path d="M10.500 3.500a2 2 0 0 1 4 0V13c1-1.500 3.500-1 3.700.8 1-1.200 3.300-.7 3.500 1 1.300-1 3.300-.2 3.300 1.700V23c0 6-3 9-8 9-4.500 0-6-2.500-8-6l-6-7c-1.500-2 1-4.500 3.200-3l4.300 3.500z" fill="#fff" stroke="#222" stroke-width="1.200"/><path d="M14.500 13v4M18.200 14v4M21.700 15v4" stroke="#222"/></svg>
    </section>
  </div>

  <div class="brandplate">
    <svg width="490" height="156" viewBox="0 0 490 156">
      <defs><pattern id="ht" width="4" height="4" patternUnits="userSpaceOnUse"><circle cx="1" cy="1" r="1" fill="#c6c6c6"/><circle cx="3" cy="3" r="1" fill="#c6c6c6"/></pattern>
      <clipPath id="pl"><path d="M70 2h418l-18 74H51z"/></clipPath></defs>
      <path d="M18 65h296l-13 86H5z" fill="#02a7ec" style="filter:drop-shadow(1px 3px 2px rgba(0,0,0,.35))"/>
      <path d="M70 1h418l-18 74H52z" fill="#fff" style="filter:drop-shadow(2px 3px 2px rgba(0,0,0,.4))"/>
      <g clip-path="url(#pl)" fill="url(#ht)"><path d="M245 12l28-3 22-7 20 3 28 4 20 5-5 8 12 6 4 10-10 6-14-1 8 16-8 14-10 6-14-4-4-16-12-4-8-12-12-8-16 3-8-14-14 2zM372 1h24l12 6-8 8-12 2-12-10zM392 18l20-10 16 8 20-2 18 14-2 8-16-2 2 14-10 18-12 4-10-14-12-6-8-14 4-8-6-4zM250 72l12-7 14 4 8 7h-40zM392 74l16-10 18 2-6 10h-30zM322 70l4 6-6-2z"/></g>
    </svg>
    <strong>@霖雨爱天津</strong><em>微软技术分享</em>
  </div>
</div>
<script src="https://cdn.jsdelivr.net/npm/bootstrap@5.3.0/dist/js/bootstrap.bundle.min.js"></script>
</body>
</html>
